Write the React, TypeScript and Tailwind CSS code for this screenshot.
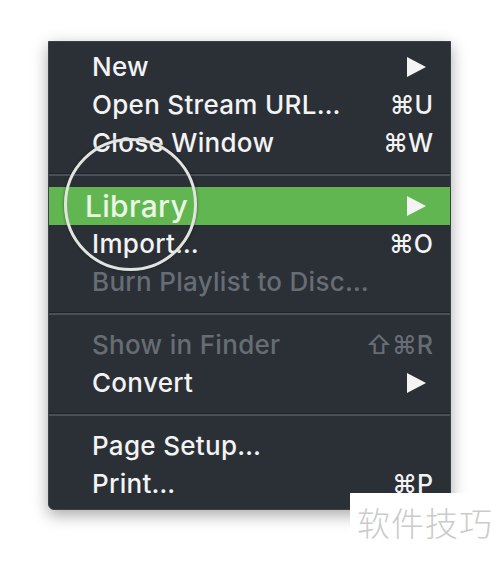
const font = { fontFamily: 'Inter, "DejaVu Sans", sans-serif' }

type Item = {
  label: string
  shortcut?: string
  submenu?: boolean
  disabled?: boolean
  active?: boolean
}

const sections: Item[][] = [
  [
    { label: 'New', submenu: true },
    { label: 'Open Stream URL…', shortcut: '⌘U' },
    { label: 'Close Window', shortcut: '⌘W' },
  ],
  [
    { label: 'Library', submenu: true, active: true },
    { label: 'Import…', shortcut: '⌘O' },
    { label: 'Burn Playlist to Disc…', disabled: true },
  ],
  [
    { label: 'Show in Finder', shortcut: '⇧⌘R', disabled: true },
    { label: 'Convert', submenu: true },
  ],
  [
    { label: 'Page Setup…' },
    { label: 'Print…', shortcut: '⌘P' },
  ],
]

function Arrow() {
  return (
    <svg width="19" height="20" viewBox="0 0 19 20" className="mr-[7px]">
      <path d="M0 0 L19 10 L0 20 Z" fill="#f4f4f4" />
    </svg>
  )
}

function Row({ item }: { item: Item }) {
  const color = item.disabled ? 'text-[#676d75]' : 'text-[#f3f3f3]'
  return (
    <div
      className={`flex h-[38px] items-center justify-between pr-[17px] ${
        item.active ? 'bg-[#62b651] pl-[36px]' : 'pl-[43px]'
      }`}
    >
      <span
        className={`${item.active ? 'text-[30px] text-[#eaf7e4]' : `text-[26px] ${color}`} font-medium leading-none tracking-[0.3px]`}
      >
        {item.label}
      </span>
      {item.submenu && <Arrow />}
      {item.shortcut && (
        <span className={`text-[25px] font-medium leading-none ${color}`}>{item.shortcut}</span>
      )}
    </div>
  )
}

function Separator() {
  return (
    <div className="py-[11px]">
      <div className="h-[3px] border-t border-[#1f2328] bg-[#4a5058]" />
    </div>
  )
}

export default function App() {
  return (
    <div className="relative h-[568px] w-[500px] overflow-hidden bg-white" style={font}>
      <div className="pl-[48px] pt-[41px]">
        <div className="w-[403px] rounded-b-[6px] border border-[#3c4148] bg-[#2b3037] py-[6px] shadow-[0_5px_16px_rgba(0,0,0,0.35)]">
          {sections.map((sec, i) => (
            <div key={i}>
              {i > 0 && <Separator />}
              {sec.map((item) => (
                <Row key={item.label} item={item} />
              ))}
            </div>
          ))}
        </div>
      </div>

      {/* magnifier ring */}
      <div className="absolute left-[64px] top-[138px] h-[133px] w-[133px] rounded-full border-[3px] border-[#e2e4e0] shadow-[0_0_3px_rgba(0,0,0,0.5)]" />

      {/* watermark */}
      <div className="absolute left-[350px] top-[493px] flex h-[75px] w-[150px] items-start justify-center bg-white pt-[13px]">
        <span
          className="text-[33px] leading-none tracking-[1px] text-[#cbcbcb]"
          style={{ fontFamily: '"Noto Sans CJK SC", sans-serif', fontWeight: 300 }}
        >
          软件技巧
        </span>
      </div>
    </div>
  )
}
